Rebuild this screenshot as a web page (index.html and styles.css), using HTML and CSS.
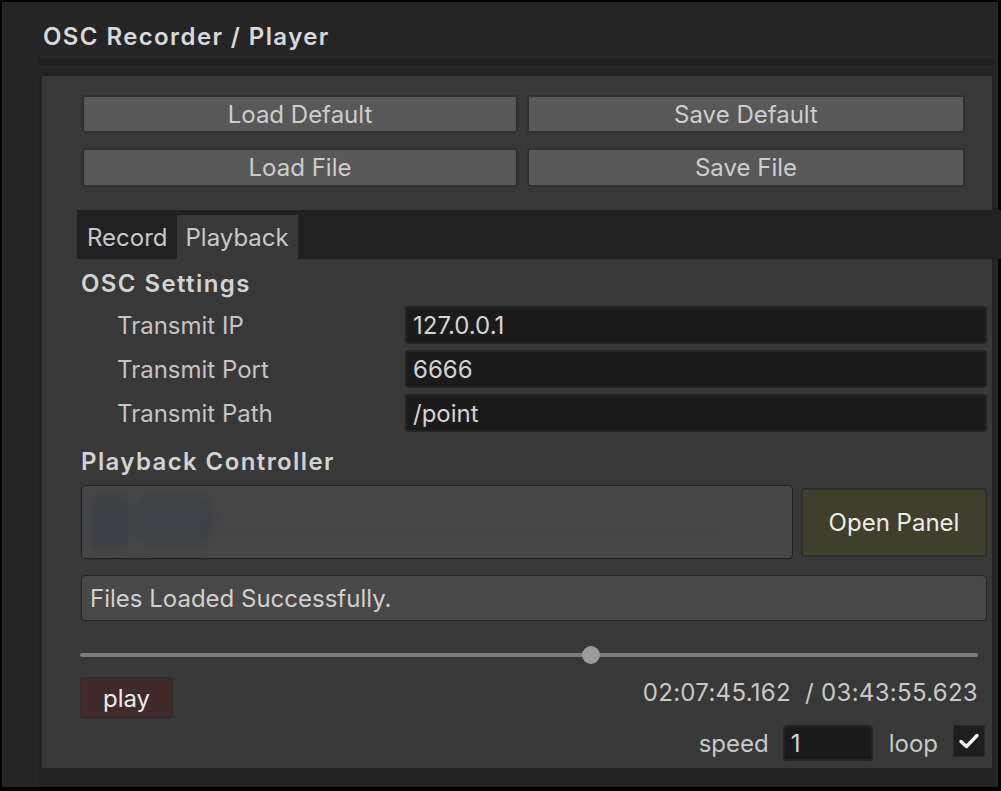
FILE: index.html
```html
<!DOCTYPE html>
<html>
<head>
<meta charset="utf-8">
<link rel="stylesheet" href="styles.css">
</head>
<body>
<div class="frame">
  <div class="window">
    <div class="title">OSC Recorder / Player</div>
    <div class="strip"></div>
    <div class="panel-wrap">
      <div class="panel">
        <div class="btn-grid">
          <div class="btn">Load Default</div>
          <div class="btn">Save Default</div>
          <div class="btn">Load File</div>
          <div class="btn">Save File</div>
        </div>
        <div class="tabbar">
          <div class="tab">Record</div>
          <div class="tab active">Playback</div>
        </div>
        <div class="section">OSC Settings</div>
        <div class="fields">
          <div class="row"><div class="label">Transmit IP</div><div class="input">127.0.0.1</div></div>
          <div class="row"><div class="label">Transmit Port</div><div class="input">6666</div></div>
          <div class="row"><div class="label">Transmit Path</div><div class="input">/point</div></div>
        </div>
        <div class="section section-2">Playback Controller</div>
        <div class="ctrl-row">
          <div class="ctrl-box">
            <div class="blob blob-a"></div>
            <div class="blob blob-b"></div>
            <div class="blob blob-c"></div>
          </div>
          <div class="open-btn">Open Panel</div>
        </div>
        <div class="status">Files Loaded Successfully.</div>
        <div class="slider">
          <div class="track"><div class="thumb" style="left: 56.9%"></div></div>
        </div>
        <div class="play-row">
          <div class="play-btn">play</div>
          <div class="time">02:07:45.162&nbsp;&nbsp;/ 03:43:55.623</div>
        </div>
        <div class="speed-row">
          <span class="small-label">speed</span>
          <div class="speed-input">1</div>
          <span class="small-label loop">loop</span>
          <div class="check">
            <svg width="22" height="18" viewBox="0 0 22 18"><path d="M3 9.5 L8.5 14.5 L19 3.5" fill="none" stroke="#f4f4f4" stroke-width="3.4" stroke-linecap="round" stroke-linejoin="round"/></svg>
          </div>
        </div>
      </div>
    </div>
  </div>
</div>
</body>
</html>
```
FILE: styles.css
```css
* { box-sizing: border-box; }
html, body { margin: 0; padding: 0; background: #000; }
body { font-family: Inter, "Noto Sans", sans-serif; font-size: 24px; color: #c8c8c8; }

.frame {
  width: 1001px;
  height: 791px;
  padding: 2px 3px 4px 2px;
  overflow: hidden;
}
.window {
  height: 785px;
  background: #252525;
  display: flex;
  flex-direction: column;
}
.title {
  height: 57px;
  padding: 20px 0 0 41px;
  font-weight: 600;
  font-size: 24px;
  line-height: 30px;
  letter-spacing: 1.4px;
  color: #d8d8d8;
}
.strip {
  margin: 0 3px 0 37px;
  height: 6px;
  background: #1f1f1f;
}
.panel-wrap {
  margin: 8px 3px 0 37px;
  padding: 3px 3px 0 3px;
  background: #222222;
  flex: 1;
  display: flex;
  flex-direction: column;
}
.panel {
  background: #383838;
  height: 692px;
  padding: 19px 0 0 0;
  display: flex;
  flex-direction: column;
}
.btn-grid {
  display: grid;
  grid-template-columns: 436px 438px;
  column-gap: 9px;
  row-gap: 15px;
  margin-left: 40px;
}
.btn {
  height: 38px;
  background: #585858;
  border: 2px solid #303030;
  border-radius: 3px;
  display: flex;
  align-items: center;
  justify-content: center;
  color: #cdcdcd;
}
.btn-grid .btn:nth-child(n+3) { height: 39px; }

.tabbar {
  margin: 23px -11px 0 35px;
  height: 49px;
  background: #212121;
  display: flex;
  align-items: flex-end;
}
.tab {
  height: 44px;
  padding: 0 9px 0 10px;
  display: flex;
  align-items: center;
  color: #c8c8c8;
}
.tab.active { background: #383838; padding: 0 9px 0 9px; }

.section {
  margin: 10px 0 0 39px;
  height: 30px;
  line-height: 30px;
  font-weight: 600;
  letter-spacing: 1.4px;
  color: #d2d2d2;
}
.fields {
  margin-top: 7px;
  display: flex;
  flex-direction: column;
  gap: 6px;
  padding: 0 5px 0 75px;
}
.row {
  display: flex;
  align-items: center;
  height: 38px;
}
.label { width: 288px; color: #c4c4c4; }
.input {
  flex: 1;
  height: 38px;
  background: #1b1b1b;
  border: 2px solid #242424;
  border-radius: 4px;
  padding-left: 6px;
  display: flex;
  align-items: center;
  color: #d4d4d4;
}
.section-2 { margin-top: 15px; }

.ctrl-row {
  margin: 8px 3px 0 39px;
  display: flex;
  align-items: center;
  gap: 8px;
}
.ctrl-box {
  width: 712px;
  height: 74px;
  background: #474747;
  border: 1px solid #1f1f1f;
  border-radius: 4px;
  display: flex;
  align-items: center;
  padding-left: 6px;
  overflow: hidden;
}
.blob { filter: blur(5px); }
.blob-a { width: 44px; height: 62px; border-radius: 20px; background: #3e4145; }
.blob-b { width: 80px; height: 52px; margin-left: 2px; border-radius: 14px; background: #3f4246; align-self: flex-start; margin-top: 8px; }
.blob-c { width: 520px; height: 14px; margin-left: -4px; margin-top: 18px; border-radius: 7px; background: #424446; }
.open-btn {
  width: 186px;
  height: 69px;
  background: #403f2b;
  border: 2px solid #2e2e2e;
  border-radius: 3px;
  display: flex;
  align-items: center;
  justify-content: center;
  color: #ececec;
}

.status {
  margin: 16px 5px 0 39px;
  height: 46px;
  background: #484848;
  border: 1px solid #232323;
  border-radius: 4px;
  display: flex;
  align-items: center;
  padding-left: 8px;
  color: #d0d0d0;
}

.slider {
  margin: 24px 14px 0 38px;
  height: 20px;
  display: flex;
  align-items: center;
}
.track {
  position: relative;
  width: 100%;
  height: 4px;
  border-radius: 2px;
  background: #7c7c7c;
}
.thumb {
  position: absolute;
  top: 50%;
  width: 18px;
  height: 18px;
  margin: -9px 0 0 -9px;
  border-radius: 50%;
  background: #9b9b9b;
}

.play-row {
  margin: 12px 14px 0 38px;
  display: flex;
  justify-content: space-between;
  align-items: flex-start;
}
.play-btn {
  width: 93px;
  height: 42px;
  background: #402a2a;
  border: 2px solid #2e2e2e;
  border-radius: 3px;
  display: flex;
  align-items: center;
  justify-content: center;
  color: #ececec;
}
.time {
  margin-top: 1px;
  height: 30px;
  line-height: 30px;
  letter-spacing: 0.3px;
  color: #c8c8c8;
}

.speed-row {
  margin: 6px 7px 0 0;
  display: flex;
  justify-content: flex-end;
  align-items: center;
  height: 36px;
}
.small-label { color: #c8c8c8; }
.speed-input {
  margin-left: 14px;
  width: 90px;
  height: 36px;
  background: #1b1b1b;
  border: 2px solid #242424;
  border-radius: 4px;
  padding-left: 6px;
  display: flex;
  align-items: center;
  color: #d4d4d4;
}
.loop { margin-left: 16px; }
.check {
  margin-left: 15px;
  width: 32px;
  height: 32px;
  align-self: flex-start;
  background: #1e1e1e;
  border: 1px solid #2a2a2a;
  display: flex;
  align-items: center;
  justify-content: center;
}
```
